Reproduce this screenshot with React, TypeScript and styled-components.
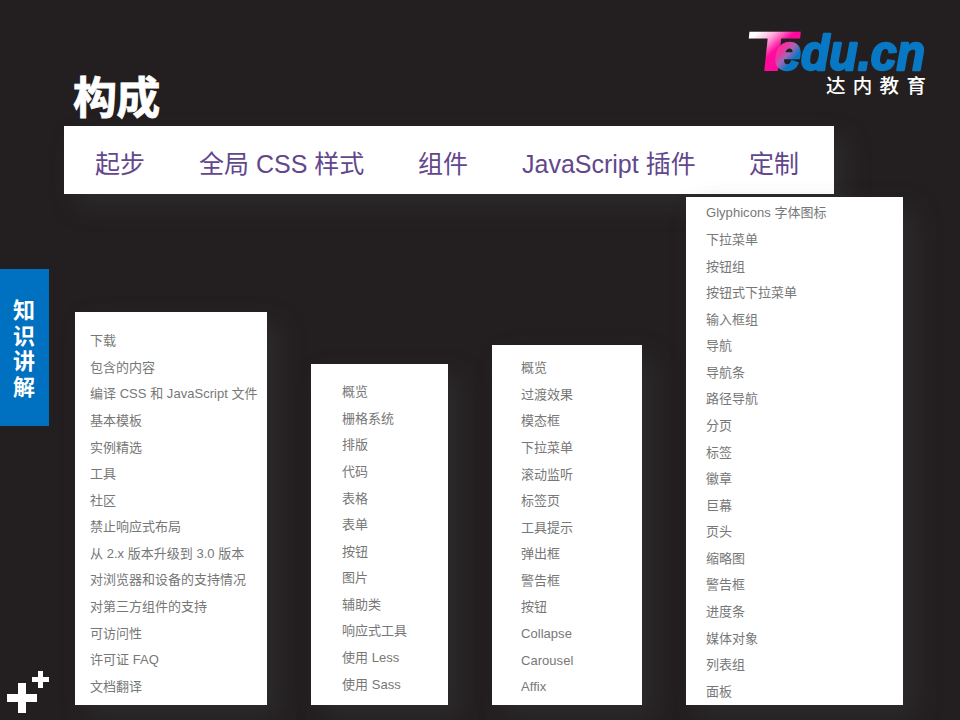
import React from "react";
import styled, { createGlobalStyle } from "styled-components";

const Global = createGlobalStyle`
  html, body { margin: 0; padding: 0; background: #231f20; }
  ul { list-style: none; margin: 0; padding: 0; }
`;

const Slide = styled.div`
  width: 960px;
  height: 720px;
  overflow: hidden;
  display: grid;
  grid-template-columns: 64px 896px;
  background: #231f20;
  font-family: "Liberation Sans", "Noto Sans CJK SC", sans-serif;
`;

const Rail = styled.aside`
  display: flex;
  flex-direction: column;
  justify-content: space-between;
  height: 445px;
  padding-top: 269px;
`;

const SideTab = styled.div`
  box-sizing: border-box;
  width: 49px;
  height: 157px;
  padding: 27px 14px 0 13px;
  background: #0070c0;
  color: #fff;
  font: 700 22px/25.5px "Noto Sans CJK SC", sans-serif;
  overflow-wrap: anywhere;
`;

const PlusMark = styled.svg`
  display: block;
  width: 52px;
  height: 50px;
`;

const Main = styled.main`
  display: flex;
  flex-direction: column;
  height: 705px;
`;

const Header = styled.header`
  display: flex;
  justify-content: space-between;
  height: 126px;
`;

const Title = styled.h1`
  margin: 64px 0 0 9px;
  color: #fff;
  font: 700 44px/62px "Noto Sans CJK SC", sans-serif;
  letter-spacing: -0.8px;
  -webkit-text-stroke: 0.8px #fff;
`;

const Logo = styled.svg`
  width: 200px;
  height: 110px;
  margin: 4px 16px 0 0;
`;

const shadow = "12px 12px 24px rgba(62, 62, 62, 0.38)";

const Nav = styled.nav`
  box-sizing: border-box;
  flex: none;
  display: flex;
  width: 770px;
  height: 68px;
  padding-left: 31px;
  gap: 54px;
  background: #fff;
  box-shadow: ${shadow};
`;

const NavItem = styled.span<{ $width: number }>`
  flex: none;
  width: ${(p) => p.$width}px;
  color: #63478c;
  font-size: 25px;
  line-height: 76px;
  white-space: nowrap;
`;

const Panels = styled.section`
  flex: 1;
  display: flex;
  align-items: flex-end;
  padding-left: 11px;
`;

const Panel = styled.ul<{ $w: number; $h: number; $top: number; $left: number; $gap: number }>`
  box-sizing: border-box;
  flex: none;
  width: ${(p) => p.$w}px;
  height: ${(p) => p.$h}px;
  margin-right: ${(p) => p.$gap}px;
  padding: ${(p) => p.$top}px 0 0 ${(p) => p.$left}px;
  background: #fff;
  box-shadow: ${shadow};
`;

const Item = styled.li`
  height: 26.58px;
  color: #777;
  font-size: 13px;
  line-height: 26.58px;
  white-space: nowrap;
`;

const Latin = styled.span`
  letter-spacing: 0.04px;
`;

const navItems = [
  { label: "起步", width: 50 },
  { label: "全局 CSS 样式", width: 165 },
  { label: "组件", width: 50 },
  { label: "JavaScript 插件", width: 173 },
  { label: "定制", width: 50 },
];

const panels = [
  {
    w: 192, h: 393, top: 16.2, left: 15, gap: 44,
    items: ["下载", "包含的内容", "编译 CSS 和 JavaScript 文件", "基本模板", "实例精选", "工具", "社区", "禁止响应式布局", "从 2.x 版本升级到 3.0 版本", "对浏览器和设备的支持情况", "对第三方组件的支持", "可访问性", "许可证 FAQ", "文档翻译"],
  },
  {
    w: 137, h: 341, top: 15.2, left: 31, gap: 44,
    items: ["概览", "栅格系统", "排版", "代码", "表格", "表单", "按钮", "图片", "辅助类", "响应式工具", "使用 Less", "使用 Sass"],
  },
  {
    w: 150, h: 360, top: 10.2, left: 29, gap: 44,
    items: ["概览", "过渡效果", "模态框", "下拉菜单", "滚动监听", "标签页", "工具提示", "弹出框", "警告框", "按钮", "Collapse", "Carousel", "Affix"],
  },
  {
    w: 217, h: 508, top: 3.4, left: 20, gap: 0,
    items: ["Glyphicons 字体图标", "下拉菜单", "按钮组", "按钮式下拉菜单", "输入框组", "导航", "导航条", "路径导航", "分页", "标签", "徽章", "巨幕", "页头", "缩略图", "警告框", "进度条", "媒体对象", "列表组", "面板"],
  },
];

const withLatin = (text: string) =>
  text.split(/([A-Za-z0-9. ]+)/).filter(Boolean).map((part, i) =>
    /[A-Za-z0-9 ]/.test(part) ? <Latin key={i}>{part}</Latin> : part
  );

const BrandLogo = () => (
  <Logo viewBox="744 4 200 110">
    <defs>
      <linearGradient id="tee" gradientUnits="userSpaceOnUse" x1="2" y1="-36" x2="27" y2="-11">
        <stop offset="0.1" stopColor="#fff" />
        <stop offset="0.45" stopColor="#ffb0dd" />
        <stop offset="0.85" stopColor="#ff0a9d" />
      </linearGradient>
      <linearGradient id="edu" gradientUnits="userSpaceOnUse" x1="778" y1="49" x2="796" y2="64">
        <stop offset="0.15" stopColor="#f5319f" />
        <stop offset="0.45" stopColor="#a565b4" />
        <stop offset="0.8" stopColor="#0878c4" />
      </linearGradient>
    </defs>
    <text transform="translate(744 70.5) skewX(-6)" fill="url(#tee)" fontFamily="Lato" fontWeight="900" fontSize="54" textLength="54" lengthAdjust="spacingAndGlyphs">T</text>
    <text x="775" y="69.5" fill="url(#edu)" stroke="url(#edu)" strokeWidth="2.4" strokeLinejoin="round" fontFamily="Liberation Sans" fontStyle="italic" fontWeight="700" fontSize="50" textLength="150" lengthAdjust="spacingAndGlyphs">edu.cn</text>
    <text x="826" y="93" fill="#fff" fontFamily="Noto Sans CJK SC" fontWeight="500" fontSize="19.5" letterSpacing="7.3">达内教育</text>
  </Logo>
);

export default function App() {
  return (
    <>
      <Global />
      <Slide>
        <Rail>
          <SideTab>知识讲解</SideTab>
          <PlusMark viewBox="0 664 52 50">
            <path d="M7 694h11v-11h8v11h11v8H26v11h-8v-11H7z M32 677h6v-6h5v6h6v5h-6v6h-5v-6h-6z" fill="#fff" />
          </PlusMark>
        </Rail>
        <Main>
          <Header>
            <Title>构成</Title>
            <BrandLogo />
          </Header>
          <Nav>
            {navItems.map((n) => (
              <NavItem key={n.label} $width={n.width}>{n.label}</NavItem>
            ))}
          </Nav>
          <Panels>
            {panels.map((p, i) => (
              <Panel key={i} $w={p.w} $h={p.h} $top={p.top} $left={p.left} $gap={p.gap}>
                {p.items.map((t) => (
                  <Item key={t}>{withLatin(t)}</Item>
                ))}
              </Panel>
            ))}
          </Panels>
        </Main>
      </Slide>
    </>
  );
}
